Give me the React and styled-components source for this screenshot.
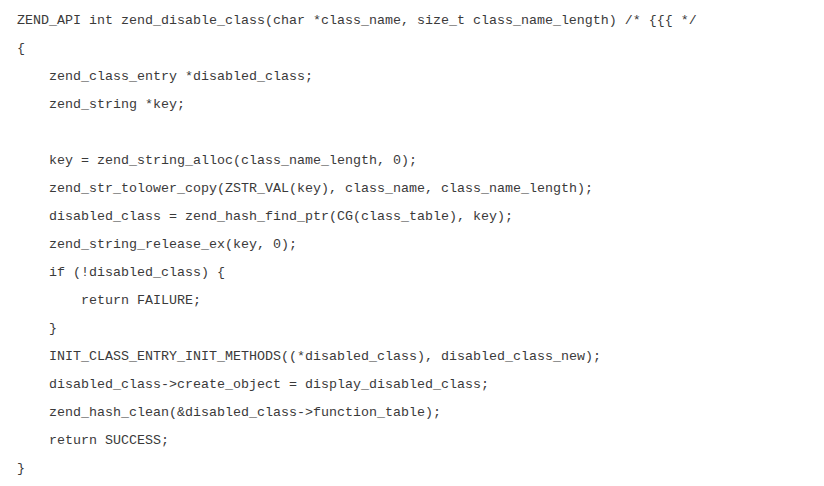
import React from 'react';
import styled, { createGlobalStyle } from 'styled-components';

const GlobalStyle = createGlobalStyle`
  html, body {
    margin: 0;
    padding: 0;
    background: #ffffff;
  }
`;

const lines = [
  [0, 'ZEND_API int zend_disable_class(char *class_name, size_t class_name_length) /* {{{ */'],
  [0, '{'],
  [1, 'zend_class_entry *disabled_class;'],
  [1, 'zend_string *key;'],
  [0, ''],
  [1, 'key = zend_string_alloc(class_name_length, 0);'],
  [1, 'zend_str_tolower_copy(ZSTR_VAL(key), class_name, class_name_length);'],
  [1, 'disabled_class = zend_hash_find_ptr(CG(class_table), key);'],
  [1, 'zend_string_release_ex(key, 0);'],
  [1, 'if (!disabled_class) {'],
  [2, 'return FAILURE;'],
  [1, '}'],
  [1, 'INIT_CLASS_ENTRY_INIT_METHODS((*disabled_class), disabled_class_new);'],
  [1, 'disabled_class->create_object = display_disabled_class;'],
  [1, 'zend_hash_clean(&disabled_class->function_table);'],
  [1, 'return SUCCESS;'],
  [0, '}'],
];

const App = () => {
  return (
    <CodeBlock>
      <GlobalStyle />
      {lines.map(([indent, text], i) => (
        <Line key={i} $indent={indent}>{text || '\u00a0'}</Line>
      ))}
    </CodeBlock>
  );
};

const CodeBlock = styled.div`
  padding: 7px 0 0 17px;
  font-family: "Liberation Mono", "DejaVu Sans Mono", monospace;
  font-size: 13.33px;
  color: #3a3a3a;
`;

const Line = styled.div`
  height: 28px;
  line-height: 28px;
  white-space: pre;
  padding-left: ${p => p.$indent * 32}px;
`;

export default App;
